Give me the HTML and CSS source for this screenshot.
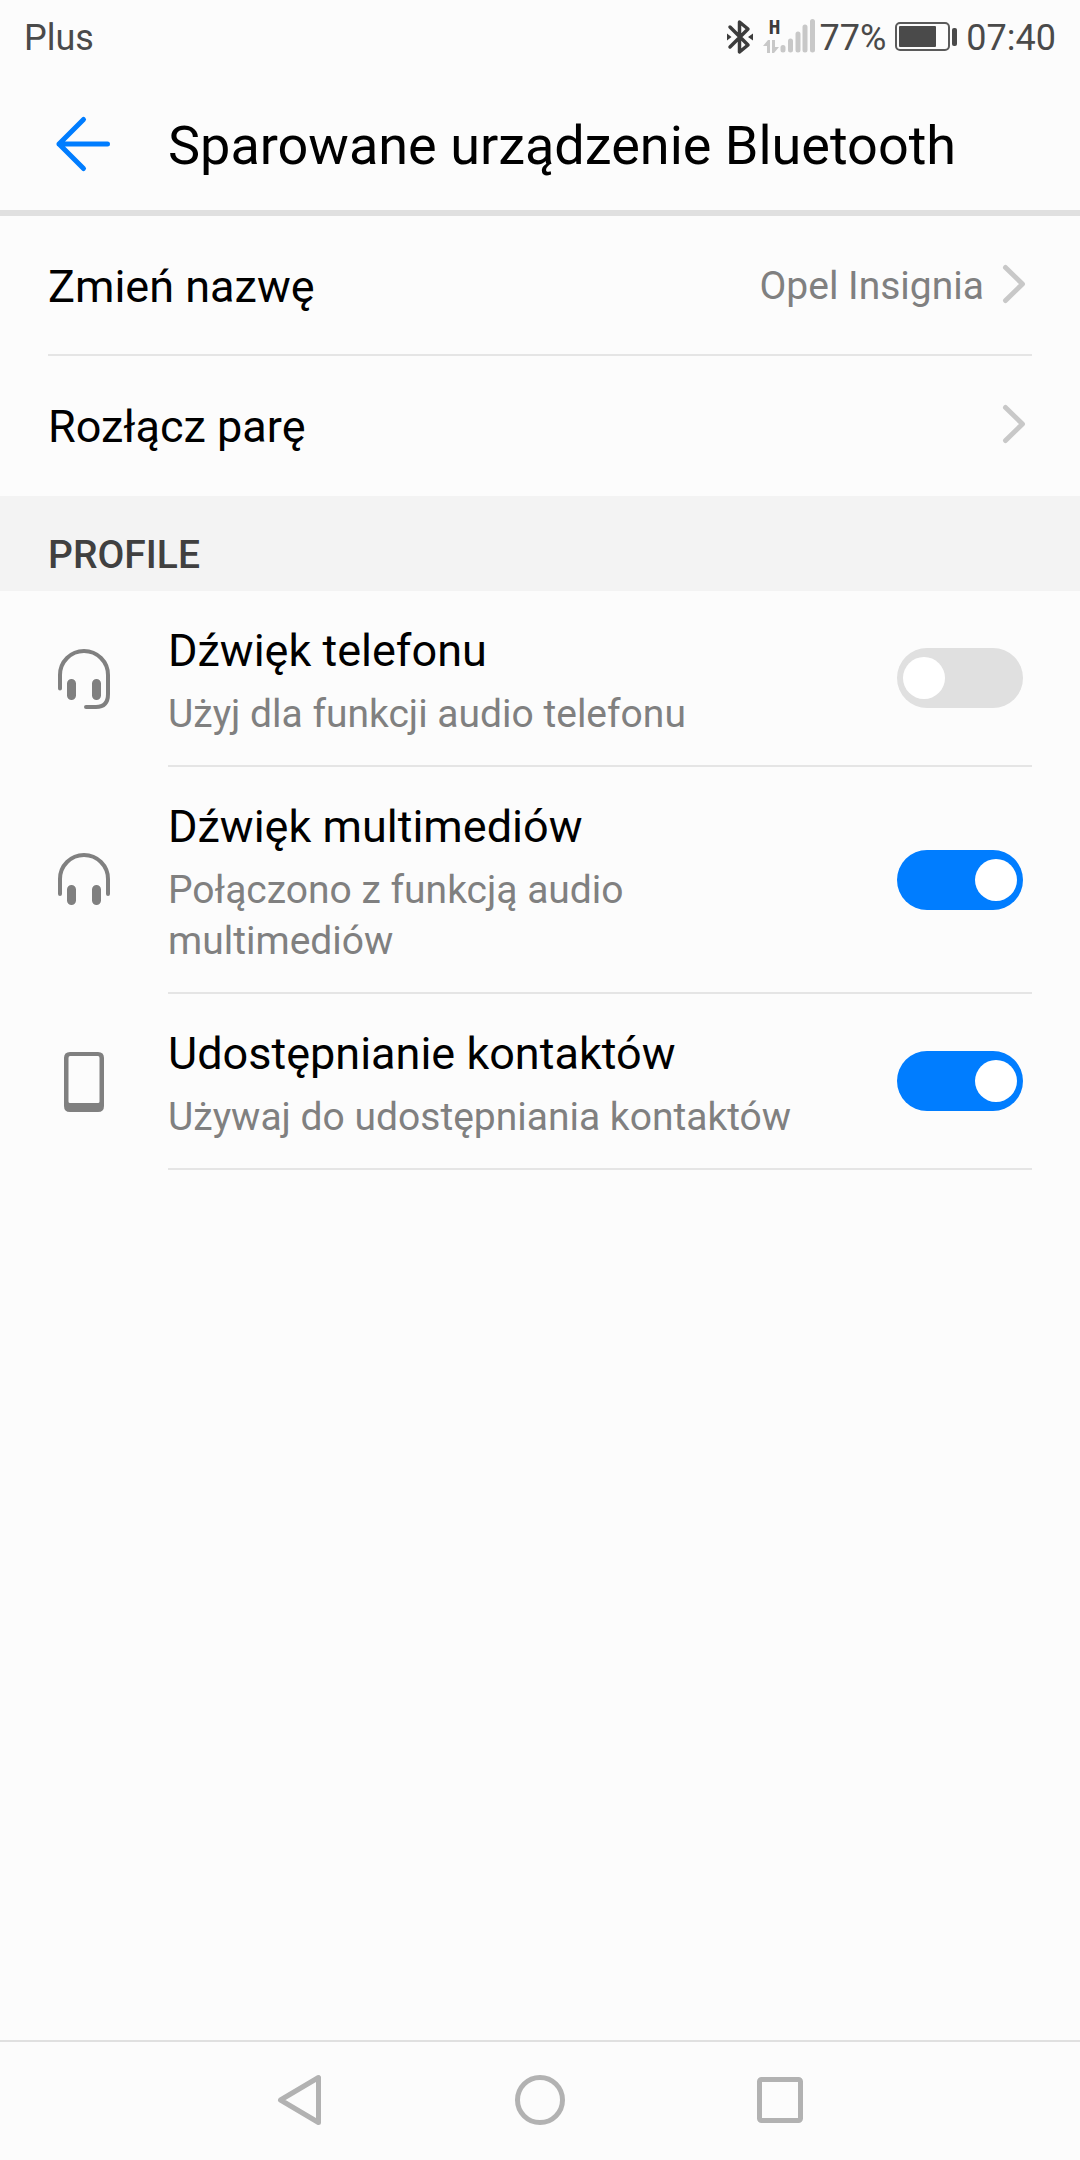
FILE: index.html
```html
<!DOCTYPE html>
<html lang="pl">
<head>
<meta charset="utf-8">
<meta name="viewport" content="width=device-width, initial-scale=1">
<title>Sparowane urządzenie Bluetooth</title>
<link rel="stylesheet" href="styles.css">
</head>
<body>
<div class="screen">
  <div class="status">
    <span class="label">Plus</span>
    <div class="indicators">
      <svg class="bt" width="28" height="36" viewBox="0 0 28 36" fill="none" aria-hidden="true">
        <path d="M4 8L22 26L13.500 33V3L22 10L4 28" stroke="#3c3c3c" stroke-width="3.500" stroke-linejoin="round" stroke-linecap="round"/>
        <path d="M1 14.500L5.500 18L1 21.500ZM27 14.500L22 18L27 21.500Z" fill="#3c3c3c"/>
      </svg>
      <div class="signal">
        <span class="network">H</span>
        <svg width="52" height="36" viewBox="0 0 52 36" aria-hidden="true">
          <path d="M0 27L5 21H7V34H4V27ZM9 21H12V28H16L11 34H9Z" fill="#c8c8c8"/>
          <path d="M20 28.500V31M27.500 22V31M35 15V31M42 8V31M49.500 2.500V31" stroke="#c8c8c8" stroke-width="5" stroke-linecap="round"/>
        </svg>
      </div>
      <span class="label">77%</span>
      <svg class="battery" width="62" height="30" viewBox="0 0 62 30" aria-hidden="true">
        <rect x="1" y="1" width="53" height="27" rx="4" fill="none" stroke="#5a5a5a" stroke-width="2"/>
        <rect x="4" y="4" width="37" height="21" rx="1" fill="#4a4a4a"/>
        <rect x="57" y="6" width="5" height="18" rx="2" fill="#4a4a4a"/>
      </svg>
      <span class="label">07:40</span>
    </div>
  </div>

  <header class="appbar">
    <button class="back" type="button" aria-label="Wstecz">
      <svg width="72" height="72" viewBox="0 0 72 72" fill="none" stroke="#007dff" stroke-width="5" stroke-linecap="round" stroke-linejoin="round"><path d="M59.500 36H11M35.500 11.500L11 36L35.500 60.500"/></svg>
    </button>
    <h1 class="title">Sparowane urządzenie Bluetooth</h1>
  </header>

  <main class="content">
    <ul class="list">
      <li><button class="row" type="button">
        <span class="name">Zmień nazwę</span>
        <span class="value">Opel Insignia</span>
        <svg class="chevron" width="24" height="40" viewBox="0 0 24 40"><path d="M3.500 3.500L20.500 20L3.500 36.500"/></svg>
      </button></li>
      <li><button class="row" type="button">
        <span class="name">Rozłącz parę</span>
        <svg class="chevron" width="24" height="40" viewBox="0 0 24 40"><path d="M3.500 3.500L20.500 20L3.500 36.500"/></svg>
      </button></li>
    </ul>

    <h2 class="section">PROFILE</h2>

    <div class="profile">
      <svg class="icon" width="72" height="72" viewBox="0 0 72 72" fill="none" stroke="#808080" stroke-width="4" stroke-linecap="round">
        <path d="M12 45.500V32A24 24 0 0 1 60 32V51Q60 64 48 64H38"/>
        <path d="M23.500 40.500V52.500M48.500 40.500V52.500" stroke-width="9"/>
      </svg>
      <div class="line">
        <label class="text" for="phone-audio"><span class="name">Dźwięk telefonu</span><span class="hint">Użyj dla funkcji audio telefonu</span></label>
        <input class="switch" id="phone-audio" type="checkbox" role="switch">
      </div>
    </div>
    <div class="profile">
      <svg class="icon" width="72" height="72" viewBox="0 0 72 72" fill="none" stroke="#808080" stroke-width="4" stroke-linecap="round">
        <path d="M12 49V34A24 24 0 0 1 60 34V49"/>
        <path d="M23.500 44.500V55.500M48.500 44.500V55.500" stroke-width="9"/>
      </svg>
      <div class="line">
        <label class="text" for="media-audio"><span class="name">Dźwięk multimediów</span><span class="hint">Połączono z funkcją audio multimediów</span></label>
        <input class="switch" id="media-audio" type="checkbox" role="switch" checked>
      </div>
    </div>
    <div class="profile">
      <svg class="icon" width="72" height="72" viewBox="0 0 72 72" fill="#808080" fill-rule="evenodd">
        <path d="M22 6H50Q56 6 56 12V60Q56 66 50 66H22Q16 66 16 60V12Q16 6 22 6ZM22 10Q20.500 10 20.500 12V55.500Q20.500 57 22 57H50Q51.500 57 51.500 55.500V12Q51.500 10 50 10Z"/>
      </svg>
      <div class="line">
        <label class="text" for="contacts"><span class="name">Udostępnianie kontaktów</span><span class="hint">Używaj do udostępniania kontaktów</span></label>
        <input class="switch" id="contacts" type="checkbox" role="switch" checked>
      </div>
    </div>
  </main>

  <nav class="navbar">
    <button type="button" aria-label="Wstecz"><svg width="72" height="72" viewBox="0 0 72 72"><path d="M54.500 13.500V58.500L16.500 36Z"/></svg></button>
    <button type="button" aria-label="Ekran główny"><svg width="72" height="72" viewBox="0 0 72 72"><circle cx="36" cy="36" r="22.500"/></svg></button>
    <button type="button" aria-label="Ostatnie aplikacje"><svg width="72" height="72" viewBox="0 0 72 72"><rect x="15.500" y="15.500" width="41" height="41" rx="2"/></svg></button>
  </nav>
</div>
</body>
</html>
```
FILE: styles.css
```css
* { box-sizing: border-box; }

body {
  margin: 0;
  background: #fcfcfc;
  color: #000;
  font-family: Roboto, "Noto Sans", sans-serif;
}

button {
  margin: 0;
  padding: 0;
  border: 0;
  background: none;
  color: inherit;
  font: inherit;
  text-align: left;
}

svg { display: block; flex: none; }

.screen {
  display: flex;
  flex-direction: column;
  min-height: 100vh;
}

/* status bar */
.status {
  display: flex;
  align-items: center;
  justify-content: space-between;
  height: 74px;
  padding: 0 24px;
  color: #4a4a4a;
  font-size: 36px;
  line-height: 42px;
}

.label { padding-top: 2px; }

.indicators { display: flex; align-items: center; }
.signal { position: relative; margin: 0 5px 0 9px; }

.network {
  position: absolute;
  top: 0;
  left: 6px;
  color: #3c3c3c;
  font: bold 20px/16px "DejaVu Sans Mono", monospace;
}

.battery { margin: 0 9px; }

/* title bar */
.appbar {
  display: flex;
  align-items: center;
  gap: 48px;
  padding: 34px 48px 30px;
  border-bottom: 6px solid #e0e0e0;
}

.title {
  margin: 0;
  padding-top: 4px;
  font-size: 54px;
  font-weight: 400;
  line-height: 68px;
}

/* settings list */
.content { flex: 1; }

.list {
  margin: 0;
  padding: 0 48px;
  list-style: none;
}

.list li { border-bottom: 2px solid #e5e5e5; }
.list li:last-child { border-color: transparent; }

.row {
  display: flex;
  align-items: center;
  width: 100%;
  height: 138px;
  padding: 2px 6px 0 0;
}

.name {
  flex: 1;
  font-size: 45px;
  line-height: 53px;
}

.value {
  color: #808080;
  font-size: 39px;
  line-height: 51px;
}

.chevron {
  margin: 0 0 4px 18px;
  fill: none;
  stroke: #c8c8c8;
  stroke-width: 5;
  stroke-linecap: round;
  stroke-linejoin: round;
}

.section {
  margin: 0;
  padding: 34px 48px 10px;
  background: #f3f3f3;
  color: #404040;
  font-size: 39px;
  font-weight: 500;
  line-height: 51px;
}

.profile {
  display: flex;
  align-items: center;
  gap: 48px;
  padding: 0 48px;
}

.line {
  display: flex;
  flex: 1;
  align-items: center;
  gap: 48px;
  padding-right: 9px;
  border-bottom: 2px solid #e5e5e5;
}

.text {
  display: flex;
  flex: 1;
  flex-direction: column;
  gap: 12px;
  padding: 33px 0 25px;
}

.hint {
  color: #808080;
  font-size: 39px;
  line-height: 51px;
}

.switch {
  appearance: none;
  flex: none;
  width: 126px;
  height: 60px;
  margin: 0;
  padding: 9px 6px;
  border-radius: 30px;
  background: #e0e0e0;
}

.switch::before {
  content: "";
  display: block;
  width: 42px;
  height: 42px;
  border-radius: 50%;
  background: #fff;
}

.switch:checked { background: #007dff; }
.switch:checked::before { margin-left: auto; }

/* system navigation */
.navbar {
  display: flex;
  justify-content: center;
  gap: 168px;
  padding: 22px 0 24px;
  border-top: 2px solid #e0e0e0;
}

.navbar svg {
  fill: none;
  stroke: #b2b2b2;
  stroke-width: 5;
  stroke-linejoin: round;
}
```
